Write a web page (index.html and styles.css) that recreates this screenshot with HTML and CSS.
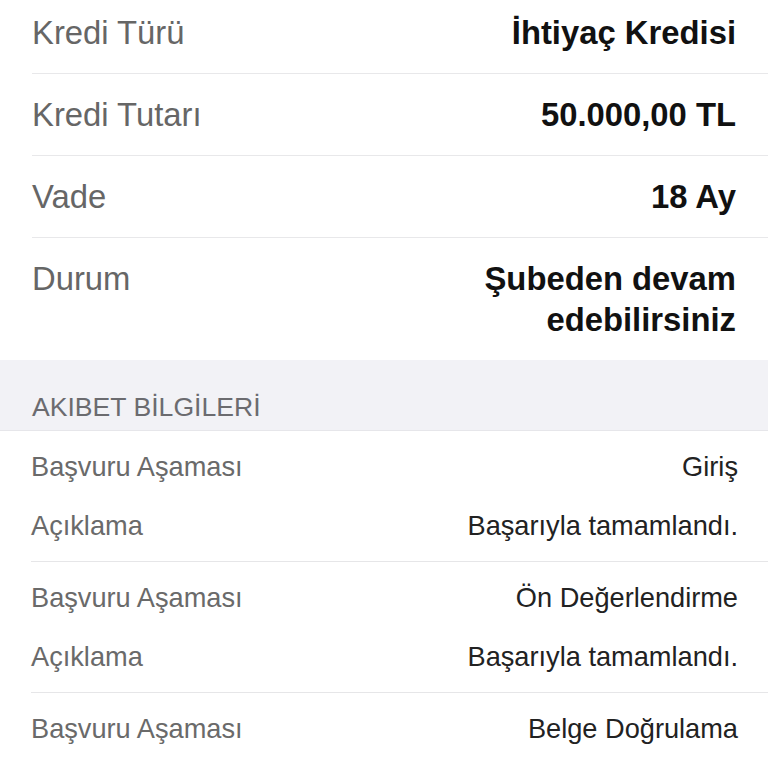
FILE: index.html
```html
<!DOCTYPE html>
<html lang="tr">
<head>
    <meta charset="UTF-8">
    <meta name="viewport" content="width=device-width, initial-scale=1.0">
    <title>Kredi Başvuru Detayı</title>
    <link rel="stylesheet" href="styles.css">
</head>
<body>
    <div class="detail-list">
        <div class="detail-row">
            <span class="label">Kredi Türü</span>
            <span class="value">İhtiyaç Kredisi</span>
        </div>
        <div class="detail-row">
            <span class="label">Kredi Tutarı</span>
            <span class="value">50.000,00 TL</span>
        </div>
        <div class="detail-row">
            <span class="label">Vade</span>
            <span class="value">18 Ay</span>
        </div>
        <div class="detail-row">
            <span class="label">Durum</span>
            <span class="value">Şubeden devam<br>edebilirsiniz</span>
        </div>
    </div>

    <div class="section-header">AKIBET BİLGİLERİ</div>

    <div class="status-list">
        <div class="status-group">
            <div class="status-row">
                <span class="label">Başvuru Aşaması</span>
                <span class="value">Giriş</span>
            </div>
            <div class="status-row">
                <span class="label">Açıklama</span>
                <span class="value">Başarıyla tamamlandı.</span>
            </div>
        </div>
        <div class="status-group">
            <div class="status-row">
                <span class="label">Başvuru Aşaması</span>
                <span class="value">Ön Değerlendirme</span>
            </div>
            <div class="status-row">
                <span class="label">Açıklama</span>
                <span class="value">Başarıyla tamamlandı.</span>
            </div>
        </div>
        <div class="status-group">
            <div class="status-row">
                <span class="label">Başvuru Aşaması</span>
                <span class="value">Belge Doğrulama</span>
            </div>
        </div>
    </div>
</body>
</html>
```

FILE: styles.css
```css
* {
    margin: 0;
    padding: 0;
    box-sizing: border-box;
    font-family: 'Liberation Sans', Arial, sans-serif;
}
html, body {
    height: 100%;
}
body {
    background: #ffffff;
    overflow: hidden;
}
/* page is scrolled a little, first row is cut at the top */
.detail-list {
    margin-top: -8px;
    padding-left: 32px;
}
.detail-row {
    display: flex;
    justify-content: space-between;
    align-items: flex-start;
    padding: 20px 32px 20px 0;
    font-size: 32.8px;
    line-height: 41px;
    border-bottom: 1px solid #e8e8ea;
}
.detail-row:last-child {
    border-bottom: none;
}
.detail-row .label {
    color: #666666;
}
.detail-row .value {
    color: #111111;
    font-weight: bold;
    text-align: right;
}
.section-header {
    height: 71px;
    padding: 0 32px 3px;
    display: flex;
    align-items: flex-end;
    background: #f2f2f6;
    color: #6b6b6f;
    font-size: 26.6px;
    line-height: 40px;
    border-bottom: 1px solid #e6e6ea;
}
.status-list {
    padding-left: 31px;
}
.status-group {
    display: flex;
    flex-direction: column;
    gap: 29px;
    padding: 21px 30px 20px 0;
    border-bottom: 1px solid #e6e6e8;
}
.status-group:last-child {
    border-bottom: none;
}
.status-row {
    display: flex;
    justify-content: space-between;
    font-size: 27.2px;
    line-height: 30px;
}
.status-row .label {
    color: #6a6a6a;
}
.status-row .value {
    color: #222222;
    text-align: right;
}
```
